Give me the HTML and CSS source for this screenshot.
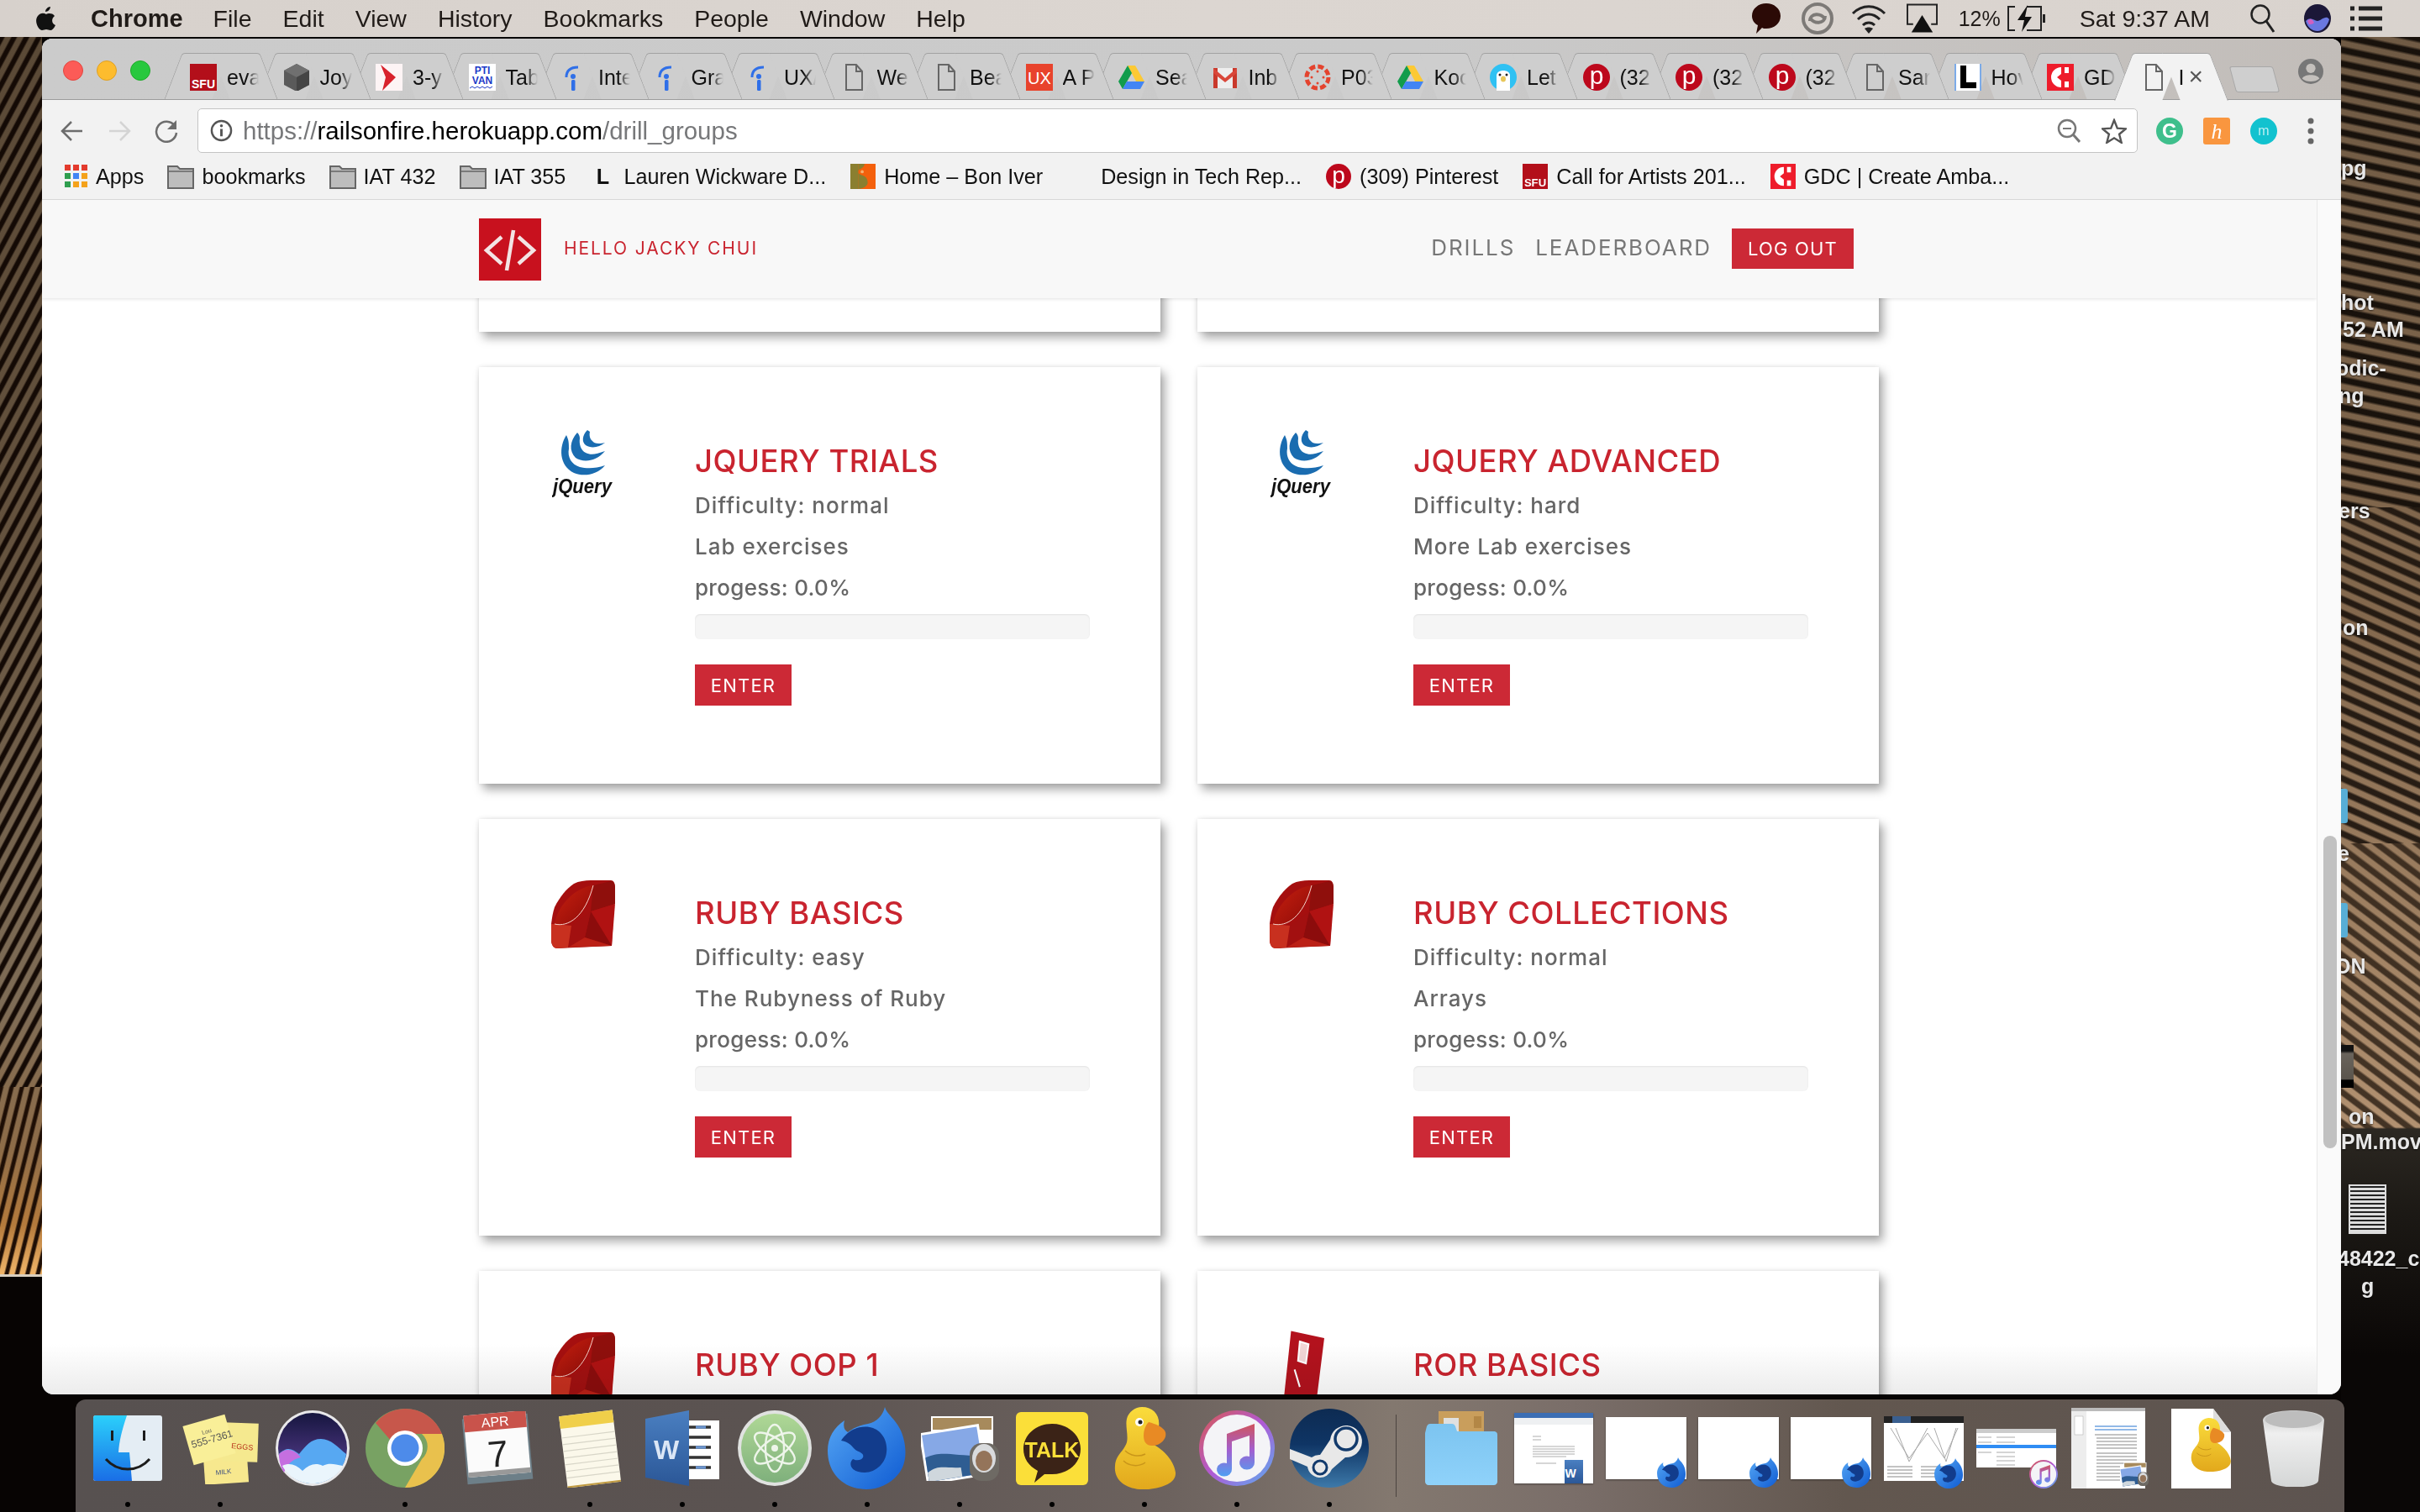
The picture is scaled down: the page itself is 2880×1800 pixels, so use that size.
FILE: index.html
```html
<!DOCTYPE html>
<html lang="en">
<head>
  <meta charset="UTF-8" />
  <title>Drill groups</title>
  <link rel="stylesheet" href="styles.css">
</head>
<body>

  <svg class="sprite" xmlns="http://www.w3.org/2000/svg">
    <defs>
      <linearGradient id="g-finder" x1="0" y1="0" x2="0" y2="1"><stop offset="0" stop-color="#2bd0fb"/><stop offset="1" stop-color="#1a6ee6"/></linearGradient>
      <linearGradient id="g-siri" x1="0" y1="0" x2="0" y2="1"><stop offset="0" stop-color="#16163f"/><stop offset=".5" stop-color="#3d2d6e"/><stop offset="1" stop-color="#2b6cc0"/></linearGradient>
      <linearGradient id="g-steam" x1="0" y1="0" x2="0" y2="1"><stop offset="0" stop-color="#0d2b52"/><stop offset=".45" stop-color="#0f3565"/><stop offset="1" stop-color="#3d79a9"/></linearGradient>
      <linearGradient id="g-fire" x1="0" y1="0" x2="1" y2="1"><stop offset="0" stop-color="#57a8f5"/><stop offset="1" stop-color="#0f5bd2"/></linearGradient>
      <linearGradient id="g-itunes" x1="0" y1="0" x2="1" y2="1"><stop offset="0" stop-color="#d9594c"/><stop offset=".5" stop-color="#b05ad6"/><stop offset="1" stop-color="#57b0f0"/></linearGradient>
      <linearGradient id="g-note" x1="0" y1="0" x2="0" y2="1"><stop offset="0" stop-color="#d0545c"/><stop offset=".5" stop-color="#a25fd0"/><stop offset="1" stop-color="#4f9ff2"/></linearGradient>
      <linearGradient id="g-duck" x1="0" y1="0" x2="0" y2="1"><stop offset="0" stop-color="#fadc3c"/><stop offset="1" stop-color="#e2a81c"/></linearGradient>
      <linearGradient id="g-folder" x1="0" y1="0" x2="0" y2="1"><stop offset="0" stop-color="#7cc4f0"/><stop offset="1" stop-color="#8fd2fa"/></linearGradient>
      <linearGradient id="g-trash" x1="0" y1="0" x2="0" y2="1"><stop offset="0" stop-color="#c4c4c4"/><stop offset=".3" stop-color="#efefef"/><stop offset="1" stop-color="#d4d6d6"/></linearGradient>
      <linearGradient id="g-word" x1="0" y1="0" x2="0" y2="1"><stop offset="0" stop-color="#4a7fc1"/><stop offset="1" stop-color="#2b5797"/></linearGradient>
      <linearGradient id="g-atom" x1="0" y1="0" x2="0" y2="1"><stop offset="0" stop-color="#afd896"/><stop offset="1" stop-color="#7fb07c"/></linearGradient>
      <linearGradient id="g-ruby" x1="0" y1="0" x2="1" y2="1"><stop offset="0" stop-color="#c8200f"/><stop offset="1" stop-color="#8e0b08"/></linearGradient>

      <!-- tab and bookmark favicons -->
      <symbol id="fav-sfu" viewBox="0 0 32 32"><rect width="32" height="32" fill="#b30f1a"/><text x="16" y="29" class="svg-sans" font-size="14" font-weight="700" text-anchor="middle" fill="#fff">SFU</text></symbol>
      <symbol id="fav-cube" viewBox="0 0 32 32"><path d="M16 0 31 8v17l-15 8L1 25V8z" fill="#5a5a5a"/><path d="M16 0 31 8 16 16 1 8z" fill="#707070"/><path d="M16 16 31 8v17l-15 8z" fill="#454545"/></symbol>
      <symbol id="fav-arrow" viewBox="0 0 32 32"><rect width="32" height="32" fill="#fdf4f5"/><path d="M6 1l18 15L8 32l4-16z" fill="#d8222c"/></symbol>
      <symbol id="fav-pti" viewBox="0 0 32 32"><rect width="32" height="32" fill="#fff"/><text x="16" y="12" class="svg-sans" font-size="12" font-weight="700" text-anchor="middle" fill="#1c39c8">PTI</text><text x="16" y="24" class="svg-sans" font-size="12" font-weight="700" text-anchor="middle" fill="#1c39c8">VAN</text><path d="M1 29l3-2 3 2 3-2 3 2 3-2 3 2 3-2 3 2 3-2" fill="none" stroke="#1c39c8"/></symbol>
      <symbol id="fav-info" viewBox="0 0 32 32"><path d="M6 16C6 8 11 4 20 4" fill="none" stroke="#2f6fe8" stroke-width="3"/><circle cx="14" cy="15" r="3" fill="#2f6fe8"/><rect x="12" y="19" width="4.500" height="13" rx="1.500" fill="#2f6fe8"/></symbol>
      <symbol id="fav-doc" viewBox="0 0 32 32"><path d="M7 1h12l7 8v22H7zM19 1v8h7" fill="none" stroke="#666" stroke-width="2"/></symbol>
      <symbol id="fav-ux" viewBox="0 0 32 32"><rect width="32" height="32" fill="#e8432c"/><text x="16" y="24" class="svg-sans" font-size="20" text-anchor="middle" fill="#fff">UX</text></symbol>
      <symbol id="fav-drive" viewBox="0 0 32 32"><path d="M11 2h9l11 19h-10z" fill="#fcc934"/><path d="M11 2 0 21l5 9 11-19z" fill="#129c4c"/><path d="M5 30h21l5-9H10z" fill="#4285f4"/></symbol>
      <symbol id="fav-gmail" viewBox="0 0 32 32"><rect x="2" y="5" width="28" height="24" fill="#eee"/><path d="M2 5h5v24H2zM25 5h5v24h-5z" fill="#c9392c"/><path d="M2 5l14 12L30 5v6L16 22 2 11z" fill="#d9473a"/></symbol>
      <symbol id="fav-canvas" viewBox="0 0 32 32"><g fill="none" stroke="#e4432e"><circle cx="16" cy="16" r="13" stroke-width="5" stroke-dasharray="7 3.200"/></g><g fill="#e4432e"><circle cx="16" cy="9" r="1.500"/><circle cx="23" cy="16" r="1.500"/><circle cx="16" cy="23" r="1.500"/><circle cx="9" cy="16" r="1.500"/></g></symbol>
      <symbol id="fav-bear" viewBox="0 0 32 32"><circle cx="16" cy="16" r="16" fill="#2fc1f3"/><path d="M8 32V14c0-8 16-8 16 0v18z" fill="#fff"/><circle cx="12" cy="13" r="1.500" fill="#222"/><circle cx="20" cy="13" r="1.500" fill="#222"/><ellipse cx="16" cy="18" rx="3" ry="3.500" fill="#e8c75a"/></symbol>
      <symbol id="fav-pin" viewBox="0 0 32 32"><circle cx="16" cy="16" r="16" fill="#bd081c"/><text x="16" y="24" class="svg-sans" font-size="30" text-anchor="middle" fill="#fff">p</text></symbol>
      <symbol id="fav-l" viewBox="0 0 32 32"><rect width="32" height="32" fill="#7cabe8"/><rect x="2" width="28" height="32" fill="#fff"/><rect x="7" y="2" width="7" height="26" fill="#000"/><rect x="7" y="22" width="19" height="7" fill="#000"/></symbol>
      <symbol id="fav-gdc" viewBox="0 0 32 32"><rect width="32" height="32" fill="#ee1c2b"/><path d="M17 4a12 12 0 0 0 0 24v-8l-5-4 5-4zM21 4h5v7h-5zM21 21h5v7h-5z" fill="#fff"/></symbol>
      <symbol id="fav-bon" viewBox="0 0 32 32"><rect width="32" height="32" fill="#f4600c"/><rect width="10" height="32" fill="#8a7f30"/><path d="M10 0h8c0 6-8 6-8 10 0 6 12 2 12 14 0 4-6 8-12 8z" fill="#8a7f30"/><circle cx="15" cy="10" r="2" fill="#f4b070"/></symbol>
      <symbol id="fav-apps" viewBox="0 0 28 28"><g fill="#e33b2e"><rect width="7" height="7"/><rect x="10" width="7" height="7"/><rect x="20" width="7" height="7"/></g><g fill="#4285f4"><rect x="10" y="10" width="7" height="7"/></g><rect y="10" width="7" height="7" fill="#2f9e4f"/><rect x="20" y="10" width="7" height="7" fill="#f4a21c"/><rect y="20" width="7" height="7" fill="#2f9e4f"/><rect x="10" y="20" width="7" height="7" fill="#f4a21c"/><rect x="20" y="20" width="7" height="7" fill="#f4a21c"/></symbol>
      <symbol id="fav-folder" viewBox="0 0 32 30"><path d="M1 3h11l3 3h16v23H1z" fill="#bdbdbd" stroke="#666" stroke-width="2"/><path d="M1 9h30" stroke="#666" stroke-width="1.500"/></symbol>

      <!-- dock icons -->
      <symbol id="dock-finder" viewBox="0 0 82 78"><rect width="82" height="78" rx="3" fill="#e4edf4"/><path d="M3 0h37c-6 18-9 30-10 44h13l3 34H3a3 3 0 0 1-3-3V3a3 3 0 0 1 3-3z" fill="url(#g-finder)"/><rect x="21" y="18" width="3" height="12" fill="#1c1c1c"/><rect x="59" y="18" width="3" height="12" fill="#1c1c1c"/><path d="M15 52c14 16 38 16 52 0" fill="none" stroke="#1c1c1c" stroke-width="3"/></symbol>
      <symbol id="dock-stickies" viewBox="0 0 95 85"><rect x="28" y="50" width="52" height="34" fill="#f7e88e" transform="rotate(-4 54 67)"/><rect x="50" y="12" width="42" height="46" fill="#f5e98f" transform="rotate(2 70 35)"/><rect x="8" y="8" width="52" height="48" fill="#f9ef98" transform="rotate(-16 34 32)"/><text x="26" y="26" class="svg-sans" font-size="7" fill="#555" transform="rotate(-16 26 26)">Lou</text><text x="14" y="42" class="svg-sans" font-size="12" fill="#555" transform="rotate(-16 14 42)">555-7361</text><text x="60" y="42" class="svg-sans" font-size="9" fill="#b8361c" transform="rotate(6 60 42)">EGGS</text><text x="42" y="74" class="svg-sans" font-size="8" fill="#3c4f80" transform="rotate(-6 42 74)">MILK</text></symbol>
      <symbol id="dock-siri" viewBox="0 0 88 90"><ellipse cx="44" cy="45" rx="44" ry="45" fill="#e8e8ea"/><ellipse cx="44" cy="45" rx="41" ry="42" fill="url(#g-siri)"/><path d="M4 52c10-10 16-6 24 0 8-10 14-18 26-18 12 0 20 10 30 18-2 18-18 35-40 35C24 87 8 72 4 52z" fill="#57a8f2"/><path d="M4 52c8-8 18-6 26 4-10 2-16 8-20 18-4-6-6-14-6-22z" fill="#c56fe0"/><path d="M8 66c8-4 16-2 24 6 8-8 16-10 24-6 8-4 14-2 24 0-6 12-20 21-36 21S14 78 8 66z" fill="#eaf5fc"/></symbol>
      <symbol id="dock-chrome" viewBox="0 0 94 94"><circle cx="47" cy="47" r="47" fill="#78a263"/><path d="M47 0a47 47 0 0 1 44 30H47a18 18 0 0 0-16 9L12 17A47 47 0 0 1 47 0z" fill="#c7574b"/><path d="M91 30a47 47 0 0 1-44 64l20-34a20 20 0 0 0 0-30z" fill="#e9c14d"/><circle cx="47" cy="47" r="21" fill="#fff"/><circle cx="47" cy="47" r="16.500" fill="#4d8bea"/></symbol>
      <symbol id="dock-calendar" viewBox="0 0 86 88"><g transform="rotate(-5 43 44)"><rect x="4" y="6" width="78" height="78" fill="#6d7f88"/><rect x="6" y="2" width="74" height="74" fill="#fbfbfb"/><rect x="6" y="2" width="74" height="20" fill="#c9534b"/><text x="43" y="18" class="svg-sans" font-size="16" text-anchor="middle" fill="#fff">APR</text><text x="43" y="66" class="svg-sans" font-size="44" text-anchor="middle" fill="#222">7</text><rect x="6" y="70" width="74" height="6" fill="#999"/></g></symbol>
      <symbol id="dock-notes" viewBox="0 0 80 93"><g transform="rotate(-7 40 46)"><rect x="8" y="4" width="64" height="86" fill="#fbf8ea"/><rect x="8" y="4" width="64" height="15" fill="#f0cf4a"/><path d="M8 30h64M8 38h64M8 46h64M8 54h64M8 62h64M8 70h64M8 78h64" stroke="#d8d6c8" stroke-width="1.200"/><rect x="8" y="88" width="64" height="2" fill="#c09a40"/></g></symbol>
      <symbol id="dock-word" viewBox="0 0 89 90"><rect x="40" y="12" width="48" height="70" fill="#fff"/><path d="M52 20h26M52 32h26M52 44h26M52 56h26M52 68h26" stroke="#333" stroke-width="3.500"/><path d="M60 20h12M60 44h12M60 68h12" stroke="#6a93cc" stroke-width="3.500"/><path d="M0 10 52 0v90L0 80z" fill="url(#g-word)"/><text x="25" y="58" class="svg-sans" font-size="32" font-weight="700" text-anchor="middle" fill="#dbe6f5">W</text></symbol>
      <symbol id="dock-atom" viewBox="0 0 88 90"><ellipse cx="44" cy="45" rx="44" ry="45" fill="#e0e2e0"/><ellipse cx="44" cy="45" rx="40" ry="41" fill="url(#g-atom)"/><g fill="none" stroke="#eef5ea" stroke-width="2.400"><ellipse cx="44" cy="45" rx="28" ry="11" transform="rotate(35 44 45)"/><ellipse cx="44" cy="45" rx="28" ry="11" transform="rotate(-35 44 45)"/><ellipse cx="44" cy="45" rx="11" ry="28"/></g><circle cx="44" cy="45" r="4" fill="#eef5ea"/></symbol>
      <symbol id="dock-firefox" viewBox="0 0 95 98"><path d="M68 0c2 8 12 14 18 26 8 16 10 40-2 54-10 12-24 18-38 18C20 98 0 80 0 52 0 36 8 24 20 16c-2 8 0 12 4 14 8-6 14-8 24-10C58 18 66 10 68 0z" fill="url(#g-fire)"/><path d="M16 40c8-12 20-18 34-16 12 2 22 14 20 30-1 12-12 24-26 24-16 0-20-10-14-16 4 2 10 2 12-2 2-6-6-6-10-10-4-4-6-8-16-10z" fill="#123c8c"/></symbol>
      <symbol id="dock-preview" viewBox="0 0 93 77"><rect x="12" y="0" width="74" height="66" fill="#fff"/><rect x="14" y="2" width="70" height="14" fill="#a78a5c"/><g transform="rotate(-9 40 45)"><rect x="2" y="14" width="72" height="62" fill="#fff"/><rect x="5" y="17" width="66" height="56" fill="#86a8e6"/><path d="M5 44c20-6 30 2 66 8v21H5z" fill="#2f5d92"/><path d="M5 62c14-8 20-2 40 0v11H5z" fill="#cfd7dd"/></g><rect x="58" y="32" width="35" height="45" rx="14" fill="#6e6a64"/><ellipse cx="75" cy="50" rx="14" ry="17" fill="#d9dbdd"/><ellipse cx="75" cy="53" rx="10" ry="12" fill="#94745a"/></symbol>
      <symbol id="dock-kakao" viewBox="0 0 86 87"><rect width="86" height="87" rx="6" fill="#fbdf39"/><path d="M43 14c19 0 34 13 34 30S62 74 43 74c-3 0-6 0-9 0L22 84l4-14C15 64 9 55 9 44c0-17 15-30 34-30z" fill="#3b2317"/><text x="43" y="54" class="svg-sans" font-size="25" font-weight="700" text-anchor="middle" fill="#fbdf39">TALK</text></symbol>
      <symbol id="dock-duck" viewBox="0 0 75 98"><path d="M34 0c14 0 22 10 20 24-2 10-6 14-8 20 10 4 26 18 28 34 1 12-14 18-32 20C20 100 0 90 2 70c1-14 10-16 14-28 2-8-2-20 0-28C18 6 26 0 34 0z" fill="url(#g-duck)"/><path d="M42 18c8 2 18 6 20 12 2 8-6 16-16 16-8 0-10-6-10-12s2-12 6-16z" fill="#e88a24"/><circle cx="31" cy="18" r="5" fill="#fff"/><circle cx="32" cy="18" r="2.500" fill="#222"/><path d="M14 52c6 6 16 8 24 4M12 64c6 6 18 8 26 2" fill="none" stroke="#c9961a" stroke-width="1.500"/></symbol>
      <symbol id="dock-itunes" viewBox="0 0 90 90"><circle cx="45" cy="45" r="45" fill="url(#g-itunes)"/><circle cx="45" cy="45" r="40" fill="#f4f4f7"/><path d="M33 28 66 16v46a9 8 0 1 1-6-7V30L39 37v33a9 8 0 1 1-6-7z" fill="url(#g-note)"/></symbol>
      <symbol id="dock-steam" viewBox="0 0 94 94"><circle cx="47" cy="47" r="47" fill="url(#g-steam)"/><path d="M0 48l26 10a15 15 0 0 1 10-3l12-18a19 19 0 1 1 18 21L50 72a15 15 0 0 1-29-3L0 60z" fill="#e8e8e8"/><circle cx="67" cy="36" r="13" fill="none" stroke="#123a6c" stroke-width="3.500"/><circle cx="36" cy="70" r="8" fill="none" stroke="#123a6c" stroke-width="3"/></symbol>
      <symbol id="dock-folder" viewBox="0 0 86 88"><rect x="16" y="0" width="54" height="40" fill="#c99e5c"/><rect x="22" y="8" width="18" height="30" fill="#e0e0e0"/><rect x="58" y="6" width="9" height="14" fill="#b38746"/><path d="M0 26l2-8c1-2 2-3 4-3h26c2 0 3 1 4 3l2 6h44c2 0 4 1 4 4v56c0 2-2 4-4 4H4c-2 0-4-2-4-4z" fill="url(#g-folder)"/></symbol>
      <symbol id="dock-wordfile" viewBox="0 0 94 84"><rect width="94" height="84" fill="#fff"/><rect width="94" height="6" fill="#3c6eb4"/><rect y="6" width="94" height="8" fill="#eef0f2"/><path d="M22 28h10M22 32h10M22 40h50M22 43h50M22 46h50M22 49h50M22 52h40M26 60h24" stroke="#999" stroke-width=".800"/><rect x="60" y="56" width="22" height="28" fill="url(#g-word)"/><text x="67" y="77" class="svg-sans" font-size="14" font-weight="700" text-anchor="middle" fill="#fff">W</text></symbol>
      <symbol id="dock-graph" viewBox="0 0 95 77"><rect width="95" height="77" fill="#fff"/><rect width="95" height="8" fill="#222"/><rect x="10" width="22" height="8" fill="#3a5f8f"/><path d="M8 14 30 50 52 20 72 50 88 14M14 14l16 40 22-40M60 14l14 40 12-40" fill="none" stroke="#aaa"/><path d="M4 60h30M4 64h30M4 68h30M4 72h30M44 60h40M44 64h40M44 68h40M44 72h40" stroke="#888"/></symbol>
      <symbol id="dock-finderfile" viewBox="0 0 95 46"><rect width="95" height="46" fill="#fff"/><rect width="95" height="5" fill="#ccc"/><rect y="19" width="95" height="4" fill="#2f8df4"/><path d="M2 10h16M2 16h16M2 28h16M24 10h22M24 16h22M24 28h22M24 33h22M24 38h22M24 43h22" stroke="#aaa"/></symbol>
      <symbol id="dock-pdf" viewBox="0 0 88 96"><rect width="88" height="96" fill="#fff"/><rect width="88" height="4" fill="#bbb"/><rect y="4" width="18" height="92" fill="#ededed"/><rect x="4" y="10" width="10" height="22" fill="#fff" stroke="#aaa" stroke-width=".500"/><path d="M28 22h50M28 26h50" stroke="#6fa2e0" stroke-width="1.500"/><path d="M28 32h50M30 36h48M30 40h48M30 44h48M30 48h48M30 54h48M30 58h48M30 62h48M30 66h48M30 70h28M30 74h28M30 78h28M30 82h28M30 86h28" stroke="#888"/></symbol>
      <symbol id="dock-duckdoc" viewBox="0 0 71 95"><path d="M0 0h50l21 28v67H0z" fill="#fff"/><path d="M50 0v22c0 4 4 6 21 6z" fill="#ddd"/></symbol>
      <symbol id="dock-trash" viewBox="0 0 73 91"><path d="M0 12c0-16 73-16 73 0L66 84c-2 10-54 10-56 0z" fill="url(#g-trash)"/><ellipse cx="36.500" cy="11" rx="34" ry="10" fill="#bdbdbd"/></symbol>

      <!-- drill logos -->
      <symbol id="logo-jquery" viewBox="0 0 72 83"><g fill="#1a6cb0"><path d="M17 8C8 22 8 44 26 53c12 5 28 2 37-9-11 4-22 4-30 2-10-3-15-12-13-22 0-6 0-10-3-16z"/><path d="M30 5c-9 10-10 22-2 30 9 6 24 5 35-8-11 4-17 5-23 2-6-3-8-11-7-17 0-3-1-5-3-7z"/><path d="M42 2c-6 6-7 14-2 18 6 4 16 3 23-3-8 2-13 1-15-2-3-2-4-7-3-11z"/></g><text x="36" y="77" class="svg-sans" font-size="23" font-weight="700" font-style="italic" text-anchor="middle" fill="#111" textLength="70" lengthAdjust="spacingAndGlyphs">jQuery</text></symbol>
      <symbol id="logo-ruby" viewBox="0 0 76 81"><path d="M47 0h24c3 0 5 3 5 9l-4 69-65 3c-4 0-7-4-7-10V52C1 44 2 38 4 32 10 20 18 10 27 4c6-3 13-4 20-4z" fill="#a50f0f"/><path d="M50 6C30 8 8 28 4 52c16 4 36-8 46-46z" fill="url(#g-ruby)"/><path d="M50 6 71 1c3 0 5 3 5 9v18L47 37z" fill="#8f0f0c"/><path d="M47 37 76 28 72 78z" fill="#b01212"/><path d="M47 37 72 78 40 68z" fill="#8c0c0c"/><path d="M24 54 47 37 40 68 20 80z" fill="#a21010"/><path d="M40 68 72 78 20 80z" fill="#bb2016"/><path d="M4 52 24 54 20 80 7 81c-4 0-7-4-7-10V52z" fill="#c8301f"/><path d="M4 52c16 4 36-8 46-46" fill="none" stroke="#f4d2ca" stroke-width="1"/></symbol>
      <symbol id="logo-ror" viewBox="0 0 50 120"><path d="M12 0 50 8 36 120 0 112z" fill="#b3121d"/><path d="M22 12l10 3-3 22-9-3zM16 44l6 20" stroke="#fff" fill="#f2d6d6" stroke-width="2"/></symbol>
    </defs>
  </svg>

  <div class="wall wall-left"></div>

  <div class="wall wall-right">
    <span class="desk-label label-pg">jpg</span>
    <span class="desk-label label-p">p</span>
    <span class="desk-label label-shot">shot</span>
    <span class="desk-label label-am">52 AM</span>
    <span class="desk-label label-odic">odic-</span>
    <span class="desk-label label-ng">ng</span>
    <span class="desk-label label-ers">ers</span>
    <span class="desk-label label-ion">ion</span>
    <div class="desk-folder folder-one"></div>
    <span class="desk-label label-e">e</span>
    <div class="desk-folder folder-two"></div>
    <span class="desk-label label-on">ON</span>
    <div class="desk-thumb"></div>
    <span class="desk-label label-on2">on</span>
    <span class="desk-label label-mov">PM.mov</span>
    <div class="desk-doc"></div>
    <span class="desk-label label-num">48422_c</span>
    <span class="desk-label label-g">g</span>
  </div>

  <header class="menubar">
    <svg class="apple-logo" viewBox="0 0 24 28"><path d="M17 0c0 3-3 6-6 6 0-3 3-6 6-6zM2 11c3-4 7-4 10-2 2-1 7-2 10 2-4 3-4 9 1 11-2 4-4 6-6 6s-3-1-5-1-3 1-5 1c-4 0-10-11-5-17z" fill="#111"/></svg>
    <span class="menu-app">Chrome</span>
    <span class="menu-item">File</span>
    <span class="menu-item">Edit</span>
    <span class="menu-item">View</span>
    <span class="menu-item">History</span>
    <span class="menu-item">Bookmarks</span>
    <span class="menu-item">People</span>
    <span class="menu-item">Window</span>
    <span class="menu-item">Help</span>

    <div class="status">
      <svg class="st-chat" viewBox="0 0 34 36"><path d="M17 0c9 0 17 6 17 15S26 30 17 30c-2 0-4 0-5-1l-7 7 2-10C3 24 0 20 0 15 0 6 8 0 17 0z" fill="#2b0a06"/></svg>
      <svg class="st-cc" viewBox="0 0 38 38"><circle cx="19" cy="19" r="17" fill="none" stroke="#7d7a77" stroke-width="4"/><path d="M10 22c0-10 14-10 18-2M28 16c0 10-14 10-18 2" fill="none" stroke="#7d7a77" stroke-width="4"/></svg>
      <svg class="st-wifi" viewBox="0 0 42 36"><g fill="none" stroke="#222" stroke-width="3"><path d="M2 12c11-11 27-11 38 0M8 19c8-8 18-8 26 0M14 26c4-4 10-4 14 0"/></g><path d="M21 36l-5-6c3-2 7-2 10 0z" fill="#222"/></svg>
      <svg class="st-air" viewBox="0 0 38 36"><path d="M8 25H1V1h36v24h-7" fill="none" stroke="#222" stroke-width="2"/><path d="M19 14l13 21H6z" fill="#111"/></svg>
      <span class="st-batt-text">12%</span>
      <svg class="st-batt" viewBox="0 0 46 32"><path d="M10 2H2v28h8M24 2h17v28H24" fill="none" stroke="#222" stroke-width="2"/><rect x="43" y="11" width="3" height="10" fill="#222"/><path d="M25 0 13 18h8l-3 14 12-18h-8z" fill="#111"/></svg>
      <span class="st-clock">Sat 9:37 AM</span>
      <svg class="st-search" viewBox="0 0 30 34"><circle cx="12" cy="12" r="10.500" fill="none" stroke="#222" stroke-width="2.500"/><path d="M19 20l9 13" stroke="#222" stroke-width="3"/></svg>
      <svg class="st-siri" viewBox="0 0 32 34"><ellipse cx="16" cy="17" rx="16" ry="17" fill="#1b1738"/><path d="M2 20c6-6 10 0 14 0s10-8 14-2c-2 8-8 14-14 14S4 28 2 20z" fill="#6a78e0"/><path d="M4 20c4-4 6-2 8 2-2 2-4 2-6 2z" fill="#d060c0"/></svg>
      <svg class="st-list" viewBox="0 0 38 34"><path d="M0 5h5M10 5h28M0 17h5M10 17h28M0 29h5M10 29h28" stroke="#222" stroke-width="5"/></svg>
    </div>
  </header>

  <main class="browser">
    <div class="tabstrip">
      <div class="traffic">
        <span class="light light-red"></span>
        <span class="light light-yellow"></span>
        <span class="light light-green"></span>
      </div>
      <div class="tabs">
        <div class="tab"><svg class="favicon"><use href="#fav-sfu"/></svg><span class="tab-title">eva</span></div>
        <div class="tab"><svg class="favicon"><use href="#fav-cube"/></svg><span class="tab-title">Joy</span></div>
        <div class="tab"><svg class="favicon"><use href="#fav-arrow"/></svg><span class="tab-title">3-y</span></div>
        <div class="tab"><svg class="favicon"><use href="#fav-pti"/></svg><span class="tab-title">Tab</span></div>
        <div class="tab"><svg class="favicon"><use href="#fav-info"/></svg><span class="tab-title">Inte</span></div>
        <div class="tab"><svg class="favicon"><use href="#fav-info"/></svg><span class="tab-title">Gra</span></div>
        <div class="tab"><svg class="favicon"><use href="#fav-info"/></svg><span class="tab-title">UX/</span></div>
        <div class="tab"><svg class="favicon"><use href="#fav-doc"/></svg><span class="tab-title">We</span></div>
        <div class="tab"><svg class="favicon"><use href="#fav-doc"/></svg><span class="tab-title">Bea</span></div>
        <div class="tab"><svg class="favicon"><use href="#fav-ux"/></svg><span class="tab-title">A P</span></div>
        <div class="tab"><svg class="favicon"><use href="#fav-drive"/></svg><span class="tab-title">Sea</span></div>
        <div class="tab"><svg class="favicon"><use href="#fav-gmail"/></svg><span class="tab-title">Inb</span></div>
        <div class="tab"><svg class="favicon"><use href="#fav-canvas"/></svg><span class="tab-title">P03</span></div>
        <div class="tab"><svg class="favicon"><use href="#fav-drive"/></svg><span class="tab-title">Koo</span></div>
        <div class="tab"><svg class="favicon"><use href="#fav-bear"/></svg><span class="tab-title">Let</span></div>
        <div class="tab"><svg class="favicon"><use href="#fav-pin"/></svg><span class="tab-title">(32</span></div>
        <div class="tab"><svg class="favicon"><use href="#fav-pin"/></svg><span class="tab-title">(32</span></div>
        <div class="tab"><svg class="favicon"><use href="#fav-pin"/></svg><span class="tab-title">(32</span></div>
        <div class="tab"><svg class="favicon"><use href="#fav-doc"/></svg><span class="tab-title">Sar</span></div>
        <div class="tab"><svg class="favicon"><use href="#fav-l"/></svg><span class="tab-title">Hov</span></div>
        <div class="tab"><svg class="favicon"><use href="#fav-gdc"/></svg><span class="tab-title">GD</span></div>
        <div class="tab tab-active"><svg class="favicon"><use href="#fav-doc"/></svg><span class="tab-title tab-title-short">I</span><span class="tab-close">&times;</span></div>
      </div>
      <div class="new-tab"></div>
      <svg class="profile" viewBox="0 0 32 32"><circle cx="16" cy="16" r="16" fill="#777"/><circle cx="16" cy="12" r="6" fill="#c4c0bc"/><path d="M5 25c3-6 19-6 22 0-5 5-17 5-22 0z" fill="#c4c0bc"/></svg>
    </div>

    <div class="toolbar">
      <svg class="tool-icon" viewBox="0 0 28 28"><path d="M26 14H3M13 3 2 14l11 11" fill="none" stroke="#6d6d6d" stroke-width="2.500"/></svg>
      <svg class="tool-icon" viewBox="0 0 28 28"><path d="M2 14h23M15 3l11 11-11 11" fill="none" stroke="#d4d4d4" stroke-width="2.500"/></svg>
      <svg class="tool-icon" viewBox="0 0 28 28"><path d="M24 8a12 12 0 1 0 2 8" fill="none" stroke="#6d6d6d" stroke-width="2.500"/><path d="M26 1v11H15z" fill="#6d6d6d"/></svg>
      <div class="omnibox">
        <svg class="omni-info" viewBox="0 0 28 28"><circle cx="14" cy="14" r="12" fill="none" stroke="#555" stroke-width="2.500"/><path d="M14 12v9" stroke="#555" stroke-width="3"/><circle cx="14" cy="8" r="1.800" fill="#555"/></svg>
        <span class="url"><span class="url-dim">https://</span>railsonfire.herokuapp.com<span class="url-dim">/drill_groups</span></span>
        <svg class="omni-zoom" viewBox="0 0 28 30"><circle cx="12" cy="12" r="10" fill="none" stroke="#777" stroke-width="2.500"/><path d="M7 12h10" stroke="#777" stroke-width="2"/><path d="M19 19l8 9" stroke="#777" stroke-width="3"/></svg>
        <svg class="omni-star" viewBox="0 0 30 30"><path d="M15 2l3.800 9.600 10.200.700-7.900 6.500 2.600 10L15 23.300 6.300 28.800l2.600-10L1 12.300l10.200-.700z" fill="none" stroke="#555" stroke-width="2.400"/></svg>
      </div>
      <svg class="ext ext-first" viewBox="0 0 32 32"><circle cx="16" cy="16" r="16" fill="#3fbf8c"/><text x="16" y="24" class="svg-sans" font-size="23" font-weight="700" text-anchor="middle" fill="#fff">G</text></svg>
      <svg class="ext" viewBox="0 0 32 32"><rect width="32" height="32" rx="3" fill="#f9963f"/><text x="16" y="25" class="svg-serif" font-size="26" font-style="italic" text-anchor="middle" fill="#fff">h</text></svg>
      <svg class="ext" viewBox="0 0 32 32"><circle cx="16" cy="16" r="16" fill="#12c2cf"/><text x="16" y="21" class="svg-sans" font-size="16" text-anchor="middle" fill="#bdeff2">m</text></svg>
      <svg class="ext-menu" viewBox="0 0 8 32"><circle cx="4" cy="4" r="3.500" fill="#666"/><circle cx="4" cy="16" r="3.500" fill="#666"/><circle cx="4" cy="28" r="3.500" fill="#666"/></svg>
    </div>

    <div class="bookmarks">
      <div class="bookmark"><svg class="bm-apps"><use href="#fav-apps"/></svg><span>Apps</span></div>
      <div class="bookmark"><svg class="bm-icon"><use href="#fav-folder"/></svg><span>bookmarks</span></div>
      <div class="bookmark"><svg class="bm-icon"><use href="#fav-folder"/></svg><span>IAT 432</span></div>
      <div class="bookmark"><svg class="bm-icon"><use href="#fav-folder"/></svg><span>IAT 355</span></div>
      <div class="bookmark"><span class="bm-icon bm-letter">L</span><span>Lauren Wickware D...</span></div>
      <div class="bookmark"><svg class="bm-icon"><use href="#fav-bon"/></svg><span>Home – Bon Iver</span></div>
      <div class="bookmark"><span class="bm-icon"></span><span>Design in Tech Rep...</span></div>
      <div class="bookmark"><svg class="bm-icon"><use href="#fav-pin"/></svg><span>(309) Pinterest</span></div>
      <div class="bookmark"><svg class="bm-icon"><use href="#fav-sfu"/></svg><span>Call for Artists 201...</span></div>
      <div class="bookmark"><svg class="bm-icon"><use href="#fav-gdc"/></svg><span>GDC | Create Amba...</span></div>
    </div>

    <div class="viewport">
      <div class="page">
        <nav class="navbar">
          <div class="nav-logo">
            <svg viewBox="0 0 74 74"><g fill="none" stroke="#f3e4e4" stroke-width="4.500"><path d="M27 22 9 38l18 16M47 22l18 16-18 16"/><path d="M41 14 33 62"/></g></svg>
          </div>
          <span class="nav-hello">HELLO JACKY CHUI</span>
          <a class="nav-link">DRILLS</a>
          <a class="nav-link">LEADERBOARD</a>
          <a class="nav-logout">LOG OUT</a>
        </nav>

        <div class="drill-grid">
          <article class="drill-card"></article>
          <article class="drill-card"></article>

          <article class="drill-card">
            <div class="drill-icon"><svg class="icon-jquery"><use href="#logo-jquery"/></svg></div>
            <div class="drill-body">
              <h2>JQUERY TRIALS</h2>
              <p>Difficulty: normal</p>
              <p>Lab exercises</p>
              <p class="progress-label">progess: 0.0%</p>
              <div class="progress"></div>
              <a class="enter-btn">ENTER</a>
            </div>
          </article>
          <article class="drill-card">
            <div class="drill-icon"><svg class="icon-jquery"><use href="#logo-jquery"/></svg></div>
            <div class="drill-body">
              <h2>JQUERY ADVANCED</h2>
              <p>Difficulty: hard</p>
              <p>More Lab exercises</p>
              <p class="progress-label">progess: 0.0%</p>
              <div class="progress"></div>
              <a class="enter-btn">ENTER</a>
            </div>
          </article>

          <article class="drill-card">
            <div class="drill-icon"><svg class="icon-ruby"><use href="#logo-ruby"/></svg></div>
            <div class="drill-body">
              <h2>RUBY BASICS</h2>
              <p>Difficulty: easy</p>
              <p>The Rubyness of Ruby</p>
              <p class="progress-label">progess: 0.0%</p>
              <div class="progress"></div>
              <a class="enter-btn">ENTER</a>
            </div>
          </article>
          <article class="drill-card">
            <div class="drill-icon"><svg class="icon-ruby"><use href="#logo-ruby"/></svg></div>
            <div class="drill-body">
              <h2>RUBY COLLECTIONS</h2>
              <p>Difficulty: normal</p>
              <p>Arrays</p>
              <p class="progress-label">progess: 0.0%</p>
              <div class="progress"></div>
              <a class="enter-btn">ENTER</a>
            </div>
          </article>

          <article class="drill-card">
            <div class="drill-icon"><svg class="icon-ruby"><use href="#logo-ruby"/></svg></div>
            <div class="drill-body">
              <h2>RUBY OOP 1</h2>
            </div>
          </article>
          <article class="drill-card">
            <div class="drill-icon"><svg class="icon-ror"><use href="#logo-ror"/></svg></div>
            <div class="drill-body">
              <h2>ROR BASICS</h2>
            </div>
          </article>
        </div>
        <div class="page-fade"></div>
      </div>
      <div class="scrollbar"><div class="scroll-thumb"></div></div>
    </div>
  </main>

  <footer class="dock">
    <div class="dock-item"><svg class="d-finder"><use href="#dock-finder"/></svg><i class="dot"></i></div>
    <div class="dock-item"><svg class="d-stickies"><use href="#dock-stickies"/></svg><i class="dot"></i></div>
    <div class="dock-item"><svg class="d-siri"><use href="#dock-siri"/></svg></div>
    <div class="dock-item"><svg class="d-chrome"><use href="#dock-chrome"/></svg><i class="dot"></i></div>
    <div class="dock-item"><svg class="d-calendar"><use href="#dock-calendar"/></svg></div>
    <div class="dock-item"><svg class="d-notes"><use href="#dock-notes"/></svg><i class="dot"></i></div>
    <div class="dock-item"><svg class="d-word"><use href="#dock-word"/></svg><i class="dot"></i></div>
    <div class="dock-item"><svg class="d-atom"><use href="#dock-atom"/></svg><i class="dot"></i></div>
    <div class="dock-item"><svg class="d-firefox"><use href="#dock-firefox"/></svg><i class="dot"></i></div>
    <div class="dock-item"><svg class="d-preview"><use href="#dock-preview"/></svg><i class="dot"></i></div>
    <div class="dock-item"><svg class="d-kakao"><use href="#dock-kakao"/></svg><i class="dot"></i></div>
    <div class="dock-item"><svg class="d-duck"><use href="#dock-duck"/></svg><i class="dot"></i></div>
    <div class="dock-item"><svg class="d-itunes"><use href="#dock-itunes"/></svg><i class="dot"></i></div>
    <div class="dock-item"><svg class="d-steam"><use href="#dock-steam"/></svg><i class="dot"></i></div>
    <div class="dock-sep"></div>
    <div class="dock-item"><svg class="d-folder"><use href="#dock-folder"/></svg></div>
    <div class="dock-item"><svg class="d-wordfile"><use href="#dock-wordfile"/></svg></div>
    <div class="dock-item"><div class="d-blank"><svg class="d-badge"><use href="#dock-firefox"/></svg></div></div>
    <div class="dock-item"><div class="d-blank"><svg class="d-badge"><use href="#dock-firefox"/></svg></div></div>
    <div class="dock-item"><div class="d-blank"><svg class="d-badge"><use href="#dock-firefox"/></svg></div></div>
    <div class="dock-item"><div class="d-file"><svg class="d-graph"><use href="#dock-graph"/></svg><svg class="d-badge"><use href="#dock-firefox"/></svg></div></div>
    <div class="dock-item"><div class="d-file"><svg class="d-finderfile"><use href="#dock-finderfile"/></svg><svg class="d-badge d-badge-itunes"><use href="#dock-itunes"/></svg></div></div>
    <div class="dock-item"><div class="d-file"><svg class="d-pdf"><use href="#dock-pdf"/></svg><svg class="d-badge d-badge-preview"><use href="#dock-preview"/></svg></div></div>
    <div class="dock-item"><div class="d-file"><svg class="d-duckdoc"><use href="#dock-duckdoc"/></svg><svg class="d-badge d-badge-duck"><use href="#dock-duck"/></svg></div></div>
    <div class="dock-item"><svg class="d-trash"><use href="#dock-trash"/></svg></div>
  </footer>

</body>
</html>
```

FILE: styles.css
```css
* {
  box-sizing: border-box;
}

body {
  position: relative;
  width: 2880px;
  height: 1800px;
  margin: 0;
  overflow: hidden;
  background: #070403;
  font-family: "Liberation Sans", Arial, sans-serif;
  color: #111;
}

.sprite {
  position: absolute;
  width: 0;
  height: 0;
}

.svg-sans {
  font-family: "Liberation Sans", Arial, sans-serif;
}

.svg-serif {
  font-family: "Liberation Serif", serif;
}

/* desktop wallpaper, only two strips show beside the window */
.wall {
  position: absolute;
  top: 44px;
  overflow: hidden;
}

.wall-left {
  left: 0;
  width: 50px;
  height: 1476px;
  border-bottom: 3px solid #d8cfc0;
  background:
    repeating-linear-gradient(118deg, #140a05 0 4px, transparent 6px 11px, #140a05 13px) 0 0 / 100% 1250px no-repeat,
    repeating-linear-gradient(104deg, #1e0e05 0 3px, transparent 5px 10px, #1e0e05 12px) 0 1250px / 100% 230px no-repeat,
    linear-gradient(to bottom, #5a4936 0, #64523e 40%, #7e6c56 78%, #8e6c48 90%, #b47a3c 96%, #f0b468 100%);
}

.wall-right {
  left: 2786px;
  width: 94px;
  height: 1756px;
  background:
    linear-gradient(to bottom, transparent 1298px, #2c2822 1300px, #1c1915 1400px, #0a0706 1570px),
    repeating-linear-gradient(192deg, rgba(14, 9, 5, .9) 0 5px, transparent 8px 13px, rgba(14, 9, 5, .9) 16px) 0 0 / 100% 560px no-repeat,
    repeating-linear-gradient(204deg, rgba(20, 13, 8, .85) 0 5px, transparent 7.500px 12.500px, rgba(20, 13, 8, .85) 15px) 0 560px / 100% 400px no-repeat,
    repeating-linear-gradient(217deg, rgba(40, 28, 18, .8) 0 5px, transparent 7px 12px, rgba(40, 28, 18, .8) 14.500px) 0 960px / 100% 340px no-repeat,
    linear-gradient(to bottom, #6f5a44 0, #84694e 40%, #ac8c6c 70%, #d6b090 100%);
}

.desk-label {
  position: absolute;
  font-size: 25px;
  line-height: 32px;
  font-weight: 700;
  color: #e8e8e8;
  white-space: nowrap;
  text-shadow: 0 1px 2px rgba(0, 0, 0, .6);
}

.label-pg { left: -7px; top: 140px; }
.label-p { left: -16px; top: 225px; }
.label-shot { left: -14px; top: 300px; }
.label-am { left: 2px; top: 332px; }
.label-odic { left: -6px; top: 378px; }
.label-ng { left: -3px; top: 411px; }
.label-ers { left: -3px; top: 548px; }
.label-ion { left: -5px; top: 687px; }
.label-e { left: -4px; top: 956px; }
.label-on { left: -8px; top: 1090px; }
.label-on2 { left: 9px; top: 1269px; }
.label-mov { left: 0; top: 1299px; }
.label-num { left: -4px; top: 1438px; }
.label-g { left: 24px; top: 1471px; }

.desk-folder {
  position: absolute;
  left: 0;
  width: 8px;
  height: 41px;
  background: #58aed6;
  border-radius: 0 3px 3px 0;
}

.folder-one { top: 895px; }
.folder-two { top: 1031px; }

.desk-thumb {
  position: absolute;
  left: 0;
  top: 1200px;
  width: 15px;
  height: 51px;
  background: linear-gradient(to bottom, #111 0, #111 14%, #6a645c 20%, #5a544c 80%, #000 82%);
}

.desk-doc {
  position: absolute;
  left: 9px;
  top: 1366px;
  width: 45px;
  height: 59px;
  border: 2px solid #ddd;
  background: repeating-linear-gradient(to bottom, #222 0 2px, #ddd 2px 5px);
}

/* mac menu bar */
.menubar {
  position: absolute;
  top: 0;
  left: 0;
  width: 2880px;
  height: 44px;
  display: flex;
  align-items: center;
  padding-left: 43px;
  background: linear-gradient(to right, #d7d1cc, #dcd6d1 50%, #d9d3ce);
  font-size: 28.500px;
  color: #201b18;
}

.apple-logo {
  width: 24px;
  height: 30px;
  margin-right: 41px;
}

.menu-app {
  font-size: 29px;
  font-weight: 700;
  margin-right: 36px;
}

.menu-item {
  margin-right: 37px;
}

.status {
  display: flex;
  align-items: center;
  margin-left: auto;
  padding-right: 45px;
}

.st-chat { width: 34px; height: 36px; margin-right: 25px; }
.st-cc { width: 38px; height: 38px; margin-right: 21px; }
.st-wifi { width: 42px; height: 36px; margin-right: 24px; }
.st-air { width: 37px; height: 36px; margin-right: 25px; }
.st-batt-text { margin-right: 7px; font-size: 25px; }
.st-batt { width: 46px; height: 32px; margin-right: 41px; }
.st-clock { margin-right: 48px; font-size: 28.500px; }
.st-search { width: 30px; height: 34px; margin-right: 34px; }
.st-siri { width: 32px; height: 34px; margin-right: 23px; }
.st-list { width: 38px; height: 34px; }

/* browser window */
.browser {
  position: absolute;
  left: 50px;
  top: 46px;
  width: 2736px;
  height: 1614px;
  display: flex;
  flex-direction: column;
  overflow: hidden;
  border-radius: 12px 12px 14px 14px;
  background: #fff;
}

.tabstrip {
  display: flex;
  height: 73px;
  flex-shrink: 0;
  padding-top: 17px;
  background: linear-gradient(to right, #cbcbcb, #cacaca 60%, #c2bdb9);
  border-bottom: 1px solid #9c9c9c;
}

.traffic {
  display: flex;
  gap: 16px;
  width: 145px;
  padding: 9px 0 0 25px;
}

.light {
  width: 24px;
  height: 24px;
  border-radius: 50%;
}

.light-red { background: #fc5b57; border: 1px solid #e2463f; }
.light-yellow { background: #fdbc2e; border: 1px solid #dfa023; }
.light-green { background: #28c83e; border: 1px solid #1eab29; }

.tabs {
  display: flex;
}

.tab {
  position: relative;
  display: flex;
  align-items: flex-start;
  width: 136px;
  height: 55px;
  margin-right: -25.5px;
  padding: 13px 0 0 31px;
}

.tab::before,
.tab::after {
  content: "";
  position: absolute;
  top: 0;
  bottom: 0;
  background: #cecece;
  border-top: 1px solid #a2a2a2;
}

.tab::before {
  left: 11px;
  right: 50%;
  z-index: 1;
  border-left: 1px solid #a2a2a2;
  border-top-left-radius: 4px;
  transform: skewX(-21deg);
}

.tab::after {
  left: 50%;
  right: 11px;
  z-index: 2;
  border-right: 1px solid #a2a2a2;
  border-top-right-radius: 4px;
  transform: skewX(21deg);
}

.tab-active::before,
.tab-active::after {
  z-index: 4;
  height: 56px;
  background: #f2f2f2;
}

.favicon {
  position: relative;
  z-index: 3;
  width: 32px;
  height: 32px;
  flex-shrink: 0;
}

.tab-active .favicon {
  z-index: 5;
}

.tab-title {
  position: relative;
  z-index: 3;
  width: 38px;
  margin-left: 12px;
  overflow: hidden;
  font-size: 25px;
  line-height: 32px;
  white-space: nowrap;
  -webkit-mask-image: linear-gradient(to right, #000 62%, transparent 100%);
  mask-image: linear-gradient(to right, #000 62%, transparent 100%);
}

.tab-title-short {
  z-index: 5;
  width: 8px;
  margin-left: 14px;
}

.tab-close {
  position: relative;
  z-index: 5;
  margin-left: 4px;
  font-size: 30px;
  line-height: 30px;
  color: #555;
}

.new-tab {
  width: 52px;
  height: 31px;
  margin: 16px 0 0 31px;
  border: 1px solid #a8a8a8;
  border-radius: 3px;
  background: #cfcfcf;
  transform: skewX(15deg);
}

.profile {
  width: 32px;
  height: 30px;
  margin: 7px 20px 0 auto;
}

.toolbar {
  display: flex;
  align-items: center;
  height: 64px;
  flex-shrink: 0;
  padding: 9px 0 0 22px;
  background: #f2f2f2;
}

.tool-icon {
  width: 28px;
  height: 28px;
  margin-right: 28px;
}

.omnibox {
  display: flex;
  align-items: center;
  width: 2309px;
  height: 53px;
  margin-left: -5px;
  padding: 0 12px 0 14px;
  background: #fff;
  border: 1px solid #c4c4c4;
  border-radius: 5px;
}

.omni-info {
  width: 27px;
  height: 27px;
}

.url {
  margin-left: 12px;
  font-size: 29.500px;
  color: #000;
}

.url-dim {
  color: #77787a;
}

.omni-zoom {
  width: 28px;
  height: 30px;
  margin-left: auto;
  margin-right: 25px;
}

.omni-star {
  width: 30px;
  height: 30px;
}

.ext {
  width: 32px;
  height: 32px;
  margin-left: 24px;
}

.ext-first {
  margin-left: 22px;
}

.ext-menu {
  width: 8px;
  height: 32px;
  margin-left: 36px;
}

.bookmarks {
  display: flex;
  align-items: center;
  gap: 28px;
  height: 55px;
  flex-shrink: 0;
  padding: 0 0 0 27px;
  background: #f2f2f2;
  border-bottom: 1px solid #d8d8d8;
  font-size: 25.200px;
}

.bookmark {
  display: flex;
  align-items: center;
  gap: 9px;
  white-space: nowrap;
}

.bm-apps {
  width: 28px;
  height: 28px;
}

.bm-icon {
  display: block;
  width: 32px;
  height: 30px;
}

.bm-letter {
  font-weight: 700;
  line-height: 30px;
  text-align: center;
}

/* the app inside the window */
.viewport {
  display: flex;
  flex: 1;
  min-height: 0;
}

.page {
  position: relative;
  flex: 1;
  overflow: hidden;
  background: #fff;
  font-family: Inter, "Open Sans", sans-serif;
}

.navbar {
  position: absolute;
  top: 0;
  left: 0;
  right: 0;
  z-index: 2;
  display: flex;
  align-items: center;
  height: 117px;
  padding: 0 551px 0 520px;
  background: #f8f8f8;
  box-shadow: 0 1px 4px rgba(0, 0, 0, .12);
}

.nav-logo {
  width: 74px;
  height: 74px;
  background: #c8111e;
}

.nav-logo svg {
  display: block;
  width: 74px;
  height: 74px;
}

.nav-hello {
  margin: -2px auto 0 27px;
  font-size: 21px;
  letter-spacing: 1.900px;
  color: #c9242f;
}

.nav-link {
  margin: -4px 24px 0 0;
  font-size: 26px;
  letter-spacing: 1.900px;
  color: #777;
}

.nav-logout {
  display: flex;
  align-items: center;
  justify-content: center;
  width: 145px;
  height: 48px;
  margin-top: -2px;
  background: #cc2936;
  font-size: 22px;
  letter-spacing: 1.200px;
  color: #fff;
}

.drill-grid {
  display: grid;
  grid-template-columns: 811px 811px;
  grid-auto-rows: 496px;
  gap: 42px 44px;
  margin: -339px 0 0 520px;
}

.drill-card {
  display: flex;
  background: #fff;
  box-shadow: 5px 7px 11px rgba(0, 0, 0, .34), 0 0 5px rgba(0, 0, 0, .1);
}

.drill-icon {
  width: 257px;
  flex-shrink: 0;
  padding: 73px 0 0 87px;
}

.drill-icon svg {
  display: block;
}

.icon-jquery { width: 72px; height: 83px; }
.icon-ruby { width: 76px; height: 81px; margin-left: -1px; }
.icon-ror { width: 52px; height: 130px; margin: -4px 0 0 12px; }

.drill-body {
  flex: 1;
  padding: 90px 84px 0 0;
}

.drill-body h2 {
  margin: 0 0 6px;
  font-size: 36.500px;
  line-height: 44px;
  font-weight: 500;
  letter-spacing: .5px;
  color: #c9242f;
}

.drill-body p {
  margin: 0;
  font-size: 26px;
  line-height: 49px;
  font-weight: 500;
  letter-spacing: 1px;
  color: #666;
}

.drill-body .progress-label {
  letter-spacing: .3px;
}

.progress {
  height: 30px;
  margin-top: 7px;
  background: #f5f5f5;
  border-radius: 6px;
  box-shadow: inset 0 1px 2px rgba(0, 0, 0, .08);
}

.enter-btn {
  display: flex;
  align-items: center;
  justify-content: center;
  width: 115px;
  height: 49px;
  margin-top: 30px;
  background: #cc2936;
  font-size: 22px;
  letter-spacing: 1.200px;
  color: #fff;
}

/* the window darkens a little above the dock */
.page-fade {
  position: absolute;
  left: 0;
  right: 0;
  bottom: 0;
  height: 60px;
  background: linear-gradient(to bottom, #fff, #ececec);
  mix-blend-mode: multiply;
}

.scrollbar {
  width: 29px;
  flex-shrink: 0;
  padding: 757px 0 0 7px;
  background: #fafafa;
  border-left: 1px solid #e8e8e8;
}

.scroll-thumb {
  width: 16px;
  height: 372px;
  border-radius: 8px;
  background: #c1c1c1;
}

/* dock */
.dock {
  position: absolute;
  left: 90px;
  top: 1666px;
  width: 2700px;
  height: 134px;
  display: flex;
  padding-left: 7px;
  border-radius: 12px 12px 0 0;
  background: linear-gradient(to right, #575150 0, #5b5351 30%, #6c625e 48%, #83786f 58%, #7a6e69 66%, #62574f 78%, #5d5450 100%);
}

.dock-item {
  position: relative;
  display: flex;
  align-items: center;
  justify-content: center;
  width: 110px;
  height: 116px;
  flex-shrink: 0;
}

.dot {
  position: absolute;
  left: 50%;
  top: 122px;
  width: 6px;
  height: 6px;
  margin-left: -3px;
  border-radius: 50%;
  background: #000;
}

.dock-sep {
  width: 1px;
  height: 98px;
  margin: 18px 22px 0 24px;
  background: #4c4440;
  flex-shrink: 0;
}

.d-finder { width: 82px; height: 78px; }
.d-stickies { width: 95px; height: 85px; }
.d-siri { width: 88px; height: 90px; }
.d-chrome { width: 94px; height: 94px; }
.d-calendar { width: 86px; height: 88px; }
.d-notes { width: 80px; height: 93px; }
.d-word { width: 89px; height: 90px; }
.d-atom { width: 88px; height: 90px; }
.d-firefox { width: 95px; height: 98px; }
.d-preview { width: 93px; height: 77px; }
.d-kakao { width: 86px; height: 87px; }
.d-duck { width: 75px; height: 98px; }
.d-itunes { width: 90px; height: 90px; }
.d-steam { width: 94px; height: 94px; }
.d-folder { width: 86px; height: 88px; }
.d-wordfile { width: 94px; height: 84px; box-shadow: 0 1px 2px rgba(0, 0, 0, .4); }
.d-trash { width: 73px; height: 91px; }

.d-blank {
  position: relative;
  width: 96px;
  height: 74px;
  background: #fff;
  box-shadow: 0 1px 2px rgba(0, 0, 0, .4);
}

.d-file {
  position: relative;
  display: flex;
  align-items: center;
  justify-content: center;
  width: 96px;
  height: 96px;
}

.d-graph { width: 95px; height: 77px; }
.d-finderfile { width: 95px; height: 46px; }
.d-pdf { width: 88px; height: 96px; }
.d-duckdoc { width: 71px; height: 95px; }

.d-badge {
  position: absolute;
  right: 0;
  bottom: -10px;
  width: 35px;
  height: 36px;
}

.d-file .d-badge {
  bottom: 0;
}

.d-file .d-badge-itunes {
  right: -2px;
  bottom: 0;
  width: 34px;
  height: 34px;
}

.d-file .d-badge-preview {
  right: 0;
  bottom: 0;
  width: 34px;
  height: 34px;
}

.d-file .d-badge-duck {
  right: 11px;
  bottom: 20px;
  width: 50px;
  height: 64px;
}
```
